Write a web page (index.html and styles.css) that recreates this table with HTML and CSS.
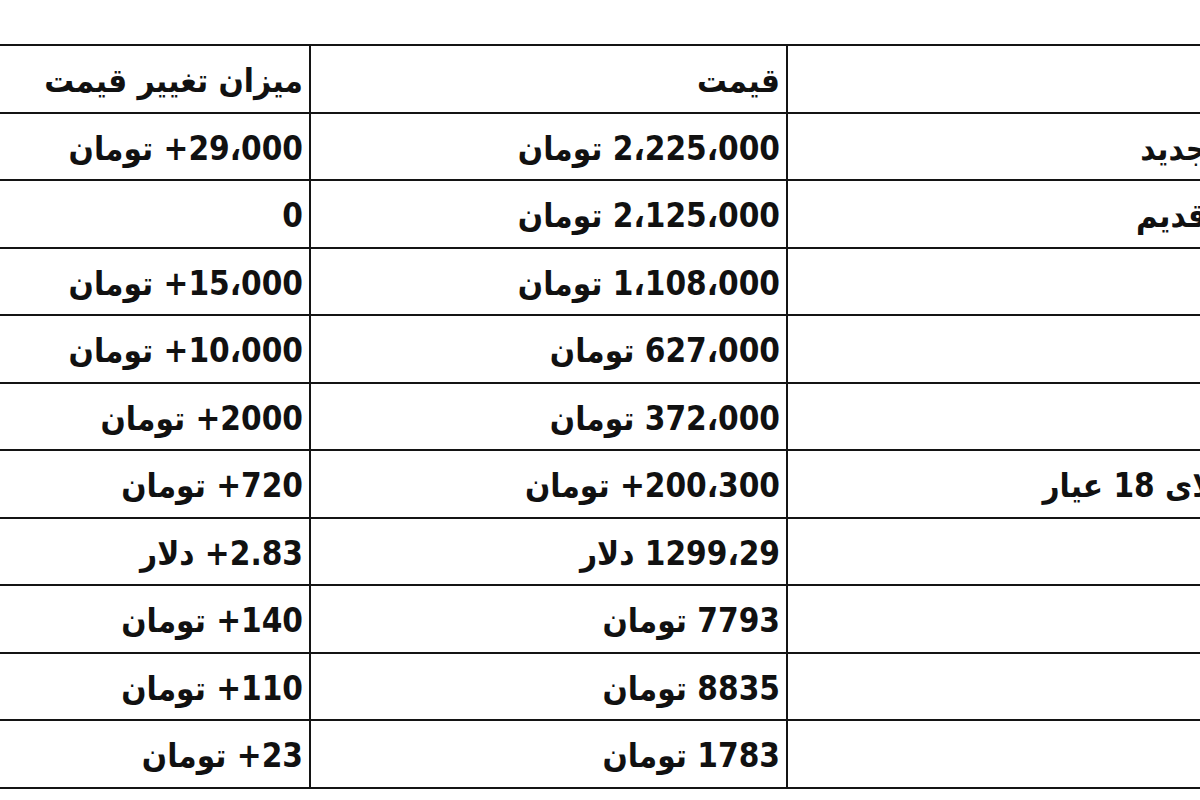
FILE: index.html
```html
<!DOCTYPE html>
<html lang="fa">
<head>
<meta charset="utf-8">
<title>قیمت طلا و سکه</title>
<link rel="stylesheet" href="styles.css">
</head>
<body>
<div class="sheet">
  <table class="prices" dir="rtl">
    <colgroup>
      <col class="c-name">
      <col class="c-price">
      <col class="c-change">
    </colgroup>
    <tr>
      <td>عنوان</td>
      <td>قیمت</td>
      <td>میزان تغییر قیمت</td>
    </tr>
    <tr>
      <td>سکه طرح جدید</td>
      <td>2،225،000 تومان</td>
      <td>29،000+ تومان</td>
    </tr>
    <tr>
      <td>سکه طرح قدیم</td>
      <td>2،125،000 تومان</td>
      <td>0</td>
    </tr>
    <tr>
      <td>نیم سکه</td>
      <td>1،108،000 تومان</td>
      <td>15،000+ تومان</td>
    </tr>
    <tr>
      <td>ربع سکه</td>
      <td>627،000 تومان</td>
      <td>10،000+ تومان</td>
    </tr>
    <tr>
      <td>سکه گرمی</td>
      <td>372،000 تومان</td>
      <td>2000+ تومان</td>
    </tr>
    <tr>
      <td>هر گرم طلای 18 عیار</td>
      <td>200،300+ تومان</td>
      <td>720+ تومان</td>
    </tr>
    <tr>
      <td>انس طلا</td>
      <td>1299،29 دلار</td>
      <td>2.83+ دلار</td>
    </tr>
    <tr>
      <td>دلار</td>
      <td>7793 تومان</td>
      <td>140+ تومان</td>
    </tr>
    <tr>
      <td>یورو</td>
      <td>8835 تومان</td>
      <td>110+ تومان</td>
    </tr>
    <tr>
      <td>درهم</td>
      <td>1783 تومان</td>
      <td>23+ تومان</td>
    </tr>
  </table>
</div>
</body>
</html>
```

FILE: styles.css
```css
html, body {
  margin: 0;
  padding: 0;
  background: #ffffff;
  overflow: hidden;
}

.sheet {
  width: 1200px;
  height: 800px;
  overflow: hidden;
  padding-top: 44px;
  box-sizing: border-box;
}

.prices {
  margin-left: -20px;
  width: 1386px;
  table-layout: fixed;
  border-collapse: collapse;
  font-family: "DejaVu Sans Condensed", "DejaVu Sans", sans-serif;
  font-size: 33px;
  font-weight: bold;
  color: #111;
}

.c-name { width: 580px; }
.c-price { width: 477px; }
.c-change { width: 329px; }

.prices tr {
  height: 67.5px;
}

.prices td {
  border: 2px solid #141414;
  padding: 4px 6px 0 6px;
  text-align: right;
  vertical-align: middle;
  white-space: nowrap;
  overflow: hidden;
}
```
